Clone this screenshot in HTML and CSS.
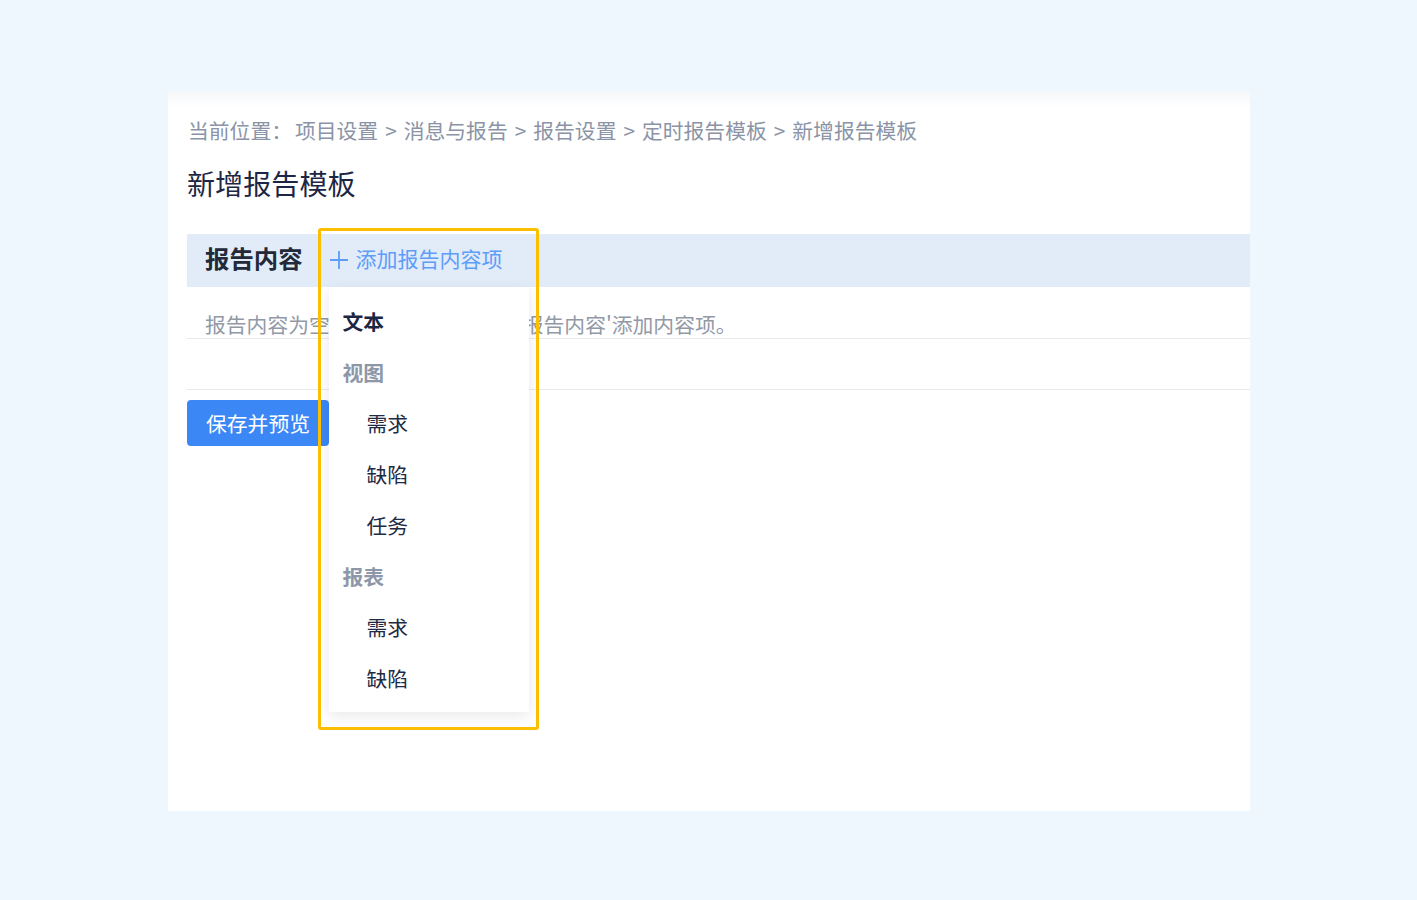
FILE: index.html
```html
<!DOCTYPE html>
<html lang="zh-CN">
<head>
<meta charset="utf-8">
<title>新增报告模板</title>
<link rel="stylesheet" href="styles.css">
</head>
<body>
<div class="page">
  <div class="card">
    <div class="breadcrumb">当前位置：<span class="crumbs">项目设置<span class="sep">&gt;</span>消息与报告<span class="sep">&gt;</span>报告设置<span class="sep">&gt;</span>定时报告模板<span class="sep">&gt;</span>新增报告模板</span></div>
    <h1 class="title">新增报告模板</h1>
    <div class="band">
      <div class="band-title">报告内容</div>
      <div class="add-wrap">
        <div class="add-btn">
          <svg class="plus" width="20" height="20" viewBox="0 0 20 20"><path d="M10 1v18M1 10h18" stroke="currentColor" stroke-width="1.8" fill="none"/></svg>
          <span>添加报告内容项</span>
        </div>
        <div class="menu">
          <div class="menu-item strong">文本</div>
          <div class="menu-item group">视图</div>
          <div class="menu-item sub">需求</div>
          <div class="menu-item sub">缺陷</div>
          <div class="menu-item sub">任务</div>
          <div class="menu-item group">报表</div>
          <div class="menu-item sub">需求</div>
          <div class="menu-item sub">缺陷</div>
        </div>
        <div class="highlight"></div>
      </div>
    </div>
    <div class="empty-row">报告内容为空，请点击上方的'添加报告内容'添加内容项。</div>
    <div class="blank-row"></div>
    <div class="actions">
      <button class="primary">保存并预览</button>
    </div>
  </div>
</div>
</body>
</html>
```

FILE: styles.css
```css
html, body {
  margin: 0;
  padding: 0;
  background: #eef6fe;
  font-family: "Noto Sans CJK SC", "Noto Sans", sans-serif;
}

.page {
  padding: 91px 0 89px 168px;
}

.card {
  width: 1082px;
  height: 720px;
  box-sizing: border-box;
  padding: 24px 0 0 19px;
  background: linear-gradient(#f5f7f9, #ffffff 16px);
}

.breadcrumb {
  font-size: 20.8px;
  line-height: 30px;
  color: #8b94a6;
  padding-left: 1px;
  white-space: nowrap;
}

.crumbs {
  margin-left: 3px;
}

.sep {
  margin: 0 7px;
}

.title {
  margin: 18px 0 0;
  font-size: 28.1px;
  line-height: 40px;
  font-weight: 400;
  color: #1d2745;
}

.band {
  margin-top: 31px;
  height: 53px;
  box-sizing: border-box;
  padding: 0 0 5px 18px;
  background: #e1ecf8;
  display: flex;
  align-items: center;
}

.band-title {
  font-size: 24.4px;
  line-height: 30px;
  font-weight: 700;
  color: #222938;
  margin-right: 26px;
}

.add-wrap {
  position: relative;
  height: 48px;
  display: flex;
  align-items: center;
}

.add-btn {
  display: flex;
  align-items: center;
  gap: 7px;
  color: #5d9cf8;
  font-size: 21px;
  line-height: 30px;
}

.plus {
  display: block;
  margin-top: 3px;
}

.menu {
  position: absolute;
  left: 0;
  top: 53px;
  width: 200px;
  padding: 8.5px 0;
  background: #ffffff;
  box-shadow: 0 4px 14px rgba(0, 0, 0, 0.09);
  z-index: 2;
}

.menu-item {
  height: 51px;
  line-height: 51px;
  font-size: 20.8px;
  color: #1f2a44;
  padding-left: 14px;
  white-space: nowrap;
}

.menu-item.strong {
  font-weight: 700;
  color: #1b2544;
}

.menu-item.group {
  font-weight: 700;
  color: #8d97a8;
}

.menu-item.sub {
  padding-left: 38px;
}

.highlight {
  position: absolute;
  left: -11px;
  top: -6px;
  width: 221px;
  height: 502px;
  box-sizing: border-box;
  border: 3px solid #fcbf00;
  border-radius: 3px;
  z-index: 3;
  pointer-events: none;
}

.empty-row {
  height: 52px;
  box-sizing: border-box;
  padding: 22px 0 0 18px;
  font-size: 20.8px;
  line-height: 30px;
  color: #9199a6;
  border-bottom: 1px solid #e8e9eb;
  white-space: nowrap;
  overflow: hidden;
}

.blank-row {
  height: 50px;
  border-bottom: 1px solid #e8e9eb;
}

.actions {
  padding-top: 10px;
}

.primary {
  width: 142px;
  height: 46px;
  border: 0;
  border-radius: 4px;
  background: #3b87f6;
  color: #ffffff;
  font-family: inherit;
  font-size: 20.8px;
  padding: 0;
  cursor: pointer;
}
```
